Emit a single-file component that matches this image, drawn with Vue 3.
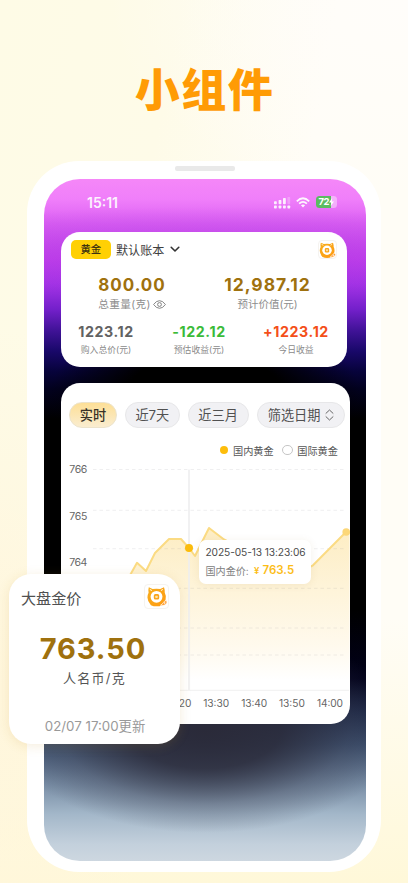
<script setup>
const totals = [
  { value: '800.00', label: '总重量(克)', eye: true },
  { value: '12,987.12', label: '预计价值(元)', eye: false },
]
const details = [
  { value: '1223.12', label: '购入总价(元)', tone: 'grey' },
  { value: '-122.12', label: '预估收益(元)', tone: 'green' },
  { value: '+1223.12', label: '今日收益', tone: 'red' },
]
const gridLines = [469.5, 510.3, 548.7, 588.3, 628, 655]
const yLabels = [
  { text: '766', y: 473.3 },
  { text: '765', y: 519.8 },
  { text: '764', y: 566 },
]
const times = [
  { text: '13:20', x: 178.4 },
  { text: '13:30', x: 216.2 },
  { text: '13:40', x: 254.2 },
  { text: '13:50', x: 291.9 },
  { text: '14:00', x: 330 },
]
const line = '120,590 131,573.5 137,562.8 146,571 155,553 169,539 181,539 189,548 195,556 209,528 224,539.5 260,558 300,572 313,565.3 346,532'
</script>

<template>
  <div class="page">
    <svg class="defs" width="0" height="0">
      <defs>
        <linearGradient id="catFill" x1="0" y1="0" x2="1" y2="1">
          <stop offset="0" stop-color="#f7ae1c" />
          <stop offset="1" stop-color="#ff9a12" />
        </linearGradient>
        <symbol id="cat" viewBox="0 0 24 24">
          <path d="M4.6 3.2 L8.2 4.9 Q12 4 15.6 4.9 L19.2 3.2 Q20.2 6 19.9 8.2 Q21.6 11.5 20.7 15 Q20 18 17.6 20.3 Q12 22.6 6.6 20.3 Q3.4 17 3.3 13 Q3.3 10.4 4.4 8.4 Q3.9 5.6 4.6 3.2Z" fill="url(#catFill)" />
          <path d="M5.9 5.4 L7.2 6.1 M17.8 5.4 L16.6 6.1" stroke="#fff" stroke-width=".9" stroke-linecap="round" />
          <circle cx="12" cy="12.3" r="5.7" fill="#fff" />
          <rect x="9.4" y="9.7" width="5.2" height="5.2" rx="1.5" fill="#f9a51c" />
          <rect x="10.9" y="11.2" width="2.2" height="2.2" rx=".5" fill="#fde3ae" />
          <path d="M15.8 20.4 Q17.6 19.6 18.6 17.8 Q19.6 16 21.4 15.8 Q22.8 17.2 21.6 19 Q19.6 21.4 15.8 20.4Z" fill="#ff9a2a" stroke="#fff" stroke-width=".7" />
          <circle cx="19.8" cy="18.2" r=".8" fill="#fff" />
        </symbol>
      </defs>
    </svg>

    <h1 class="title">小组件</h1>

    <div class="phone">
      <div class="speaker"></div>
      <div class="screen">
        <div class="status">
          <span class="clock">15:11</span>
          <svg class="signal" width="17" height="12" viewBox="0 0 17 12">
            <g fill="#fff">
              <rect x="0" y="4.2" width="2.8" height="3" rx=".7" />
              <rect x="4.6" y="3" width="2.8" height="4.2" rx=".7" />
              <rect x="9" y="1" width="2.8" height="6.2" rx=".7" />
              <rect x="13.4" y="0" width="2.8" height="7.2" rx=".7" opacity=".3" />
              <rect x="0" y="8.6" width="2.8" height="2.8" rx=".7" />
              <rect x="4.6" y="8.6" width="2.8" height="2.8" rx=".7" />
              <rect x="9" y="8.6" width="2.8" height="2.8" rx=".7" />
              <rect x="13.4" y="8.6" width="2.8" height="2.8" rx=".7" />
            </g>
          </svg>
          <svg class="wifi" width="14" height="11" viewBox="0 0 14 11">
            <g fill="none" stroke="#fff" stroke-width="1.8">
              <path d="M.8 4.3 Q7 -1.8 13.2 4.3" />
              <path d="M3.1 6.7 Q7 3.1 10.9 6.7" />
            </g>
            <path d="M4.9 8.3 Q7 6.6 9.1 8.3 L7 10.5Z" fill="#fff" />
          </svg>
          <div class="battery">
            <span>72</span>
            <svg width="5" height="8" viewBox="0 0 5 8"><path d="M3.2 0 L0 4.4 H2.2 L1.7 8 L5 3.4 H2.8Z" fill="#fff" /></svg>
          </div>
        </div>

        <section class="card account">
          <header class="account-head">
            <span class="tag">黄金</span>
            <span class="book">默认账本</span>
            <svg class="chevron" width="10" height="7" viewBox="0 0 10 7"><path d="M1.2 1.3 L5 5 L8.8 1.3" fill="none" stroke="#333" stroke-width="1.6" stroke-linecap="round" stroke-linejoin="round" /></svg>
            <span class="logo small"><svg><use href="#cat" /></svg></span>
          </header>
          <div class="totals">
            <div v-for="t in totals" :key="t.label" class="total">
              <strong>{{ t.value }}</strong>
              <span class="total-label">{{ t.label }}
                <svg v-if="t.eye" width="13" height="9" viewBox="0 0 13 9">
                  <path d="M.6 4.5 Q3.2 .7 6.5 .7 Q9.8 .7 12.4 4.5 Q9.8 8.3 6.5 8.3 Q3.2 8.3 .6 4.5Z" fill="none" stroke="#777" stroke-width=".9" />
                  <circle cx="6.5" cy="4.5" r="1.9" fill="none" stroke="#777" stroke-width=".9" />
                </svg>
              </span>
            </div>
          </div>
          <div class="details">
            <div v-for="d in details" :key="d.label" class="detail">
              <strong :class="d.tone">{{ d.value }}</strong>
              <span>{{ d.label }}</span>
            </div>
          </div>
        </section>

        <section class="card market">
          <nav class="pills">
            <span class="pill active">实时</span>
            <span class="pill week">近7天</span>
            <span class="pill month">近三月</span>
            <span class="pill range">筛选日期
              <svg width="9" height="12" viewBox="0 0 9 12"><path d="M1 4.3 L4.5 1 L8 4.3 M1 7.7 L4.5 11 L8 7.7" fill="none" stroke="#666" stroke-width="1" stroke-linecap="round" stroke-linejoin="round" /></svg>
            </span>
          </nav>
          <div class="legend">
            <i class="dot on"></i><span>国内黄金</span>
            <i class="dot off"></i><span>国际黄金</span>
          </div>
          <svg class="chart" width="292" height="262" viewBox="61 460 292 262">
            <defs>
              <linearGradient id="area" x1="0" y1="0" x2="0" y2="1">
                <stop offset="0" stop-color="#fdedc3" />
                <stop offset=".4" stop-color="#fef4da" />
                <stop offset=".75" stop-color="#fffaee" />
                <stop offset=".95" stop-color="#ffffff" />
              </linearGradient>
            </defs>
            <polygon :points="`${line} 349.5,531 349.5,688 120,688`" fill="url(#area)" />
            <line v-for="y in gridLines" :key="y" x1="93" x2="345" :y1="y" :y2="y" stroke="#80808a" stroke-opacity=".13" stroke-width="1" stroke-dasharray="3.5 3" />
            <line x1="93" x2="349" y1="690.3" y2="690.3" stroke="#f1f1f1" />
            <line x1="189" x2="189" y1="469.5" y2="690" stroke="#eeeeef" stroke-width="1.6" />
            <polyline :points="line" fill="none" stroke="#fbdb83" stroke-width="2" stroke-linejoin="round" />
            <circle cx="189" cy="548" r="4" fill="#fbbc0c" />
            <circle cx="346.2" cy="532" r="3.8" fill="#fcd778" />
            <text v-for="l in yLabels" :key="l.text" x="69.3" :y="l.y" class="axis" font-size="10.5" textLength="18">{{ l.text }}</text>
            <text v-for="t in times" :key="t.text" :x="t.x" y="706.6" text-anchor="middle" class="axis" font-size="10.2" textLength="26">{{ t.text }}</text>
          </svg>
          <div class="tooltip">
            <div class="tip-time">2025-05-13 13:23:06</div>
            <div class="tip-row"><span>国内金价:</span><i>¥</i><b>763.5</b></div>
          </div>
        </section>
      </div>
    </div>

    <section class="widget">
      <header class="widget-head">
        <span>大盘金价</span>
        <span class="logo large"><svg><use href="#cat" /></svg></span>
      </header>
      <strong class="price">763.50</strong>
      <span class="unit">人名币/克</span>
      <span class="updated">02/07 17:00更新</span>
    </section>
  </div>
</template>

<style>
body {
  background: #fffdf3;
}
</style>

<style scoped>
.page {
  position: relative;
  width: 408px;
  height: 883px;
  overflow: hidden;
  box-sizing: border-box;
  padding-top: 64.5px;
  font-family: Inter, "Noto Sans CJK SC", sans-serif;
  background:
    radial-gradient(ellipse 300px 200px at 100% 0, #fffdfa, rgba(255, 253, 250, 0) 100%),
    radial-gradient(ellipse 160px 360px at 0 78%, #fff6dc, rgba(255, 246, 220, 0) 100%),
    linear-gradient(to bottom, rgba(255, 247, 215, 0) 70%, #fff8d9 100%),
    linear-gradient(100deg, #fefbe6 0, #fefbe8 32%, #fffdf6 60%, #fffdf6 100%);
}
.defs { position: absolute; }
.title {
  margin: 0;
  height: 52px;
  line-height: 52px;
  text-align: center;
  font-size: 45px;
  font-weight: 900;
  letter-spacing: 1.5px;
  padding-left: 1px;
  color: #ff9b05;
}
.phone {
  box-sizing: border-box;
  width: 354px;
  height: 711px;
  margin: 44.5px 0 0 27px;
  padding: 4.5px 15.5px 0 17px;
  border-radius: 52px;
  background: #fff;
}
.speaker {
  width: 60px;
  height: 5.5px;
  margin: 0 0 8px 131px;
  border-radius: 2px;
  background: #e9e9e9;
}
.screen {
  position: relative;
  box-sizing: border-box;
  height: 681.5px;
  padding: 0 0 0 17px;
  border-radius: 36px;
  background:
    radial-gradient(ellipse 200px 104px at 50% 550px, #2a2a39 0, rgba(42, 42, 57, .85) 38%, rgba(56, 58, 76, .35) 72%, rgba(80, 90, 110, 0) 100%),
    linear-gradient(to bottom, rgba(0, 0, 0, 0) 0, rgba(0, 0, 0, 0) 430px, #01011a 500px, #1a2544 530px, #3c506f 565px, #71869f 600px, #a3b7c9 635px, #c3d0dc 665px, #cdd7e0 100%),
    radial-gradient(ellipse 155px 80px at 50% 215px, #000 50%, rgba(0, 0, 0, 0) 100%),
    radial-gradient(ellipse 400px 46px at 50% 74px, rgba(150, 45, 215, .4), rgba(150, 45, 215, 0) 100%),
    linear-gradient(to bottom, #f587f8 0, #f07ffa 20px, #db5ff3 45px, #c742ee 80px, #a433e6 105px, #7420cb 130px, #3f1296 152px, #19086a 172px, #07033c 192px, #02011e 210px, #000 240px);
}
.status {
  display: flex;
  align-items: center;
  height: 46px;
  padding-left: 26px;
  color: #fff;
}
.clock {
  width: 187px;
  font-size: 14px;
  font-weight: 600;
  letter-spacing: 0;
  opacity: .9;
}
.signal { margin: 1px 5px 0 0; opacity: .88; }
.wifi { margin-right: 6px; opacity: .93; }
.battery {
  display: flex;
  align-items: center;
  width: 20.5px;
  height: 11.5px;
  border-radius: 3.5px;
  background: linear-gradient(to right, #5bbb61 15px, rgba(255, 255, 255, .4) 15px);
}
.battery span {
  margin-left: 2.5px;
  font-size: 9.5px;
  line-height: 12px;
  font-weight: 700;
  letter-spacing: -.4px;
}
.card {
  position: relative;
  box-sizing: border-box;
  background: #fff;
  border-radius: 19px;
}
.account {
  width: 286px;
  height: 135px;
  margin-top: 7px;
  padding-top: 7px;
}
.account-head {
  display: flex;
  align-items: center;
  height: 21px;
  padding: 0 10px 0 10px;
}
.tag {
  width: 39.5px;
  height: 18.5px;
  line-height: 18.5px;
  border-radius: 5px;
  background: #ffd004;
  text-align: center;
  font-size: 10.3px;
  font-weight: 500;
  color: #3d3310;
}
.book {
  margin-left: 5.5px;
  font-size: 12.1px;
  color: #3f3f3f;
}
.chevron { margin-left: 5.5px; }
.logo {
  display: flex;
  align-items: center;
  justify-content: center;
  box-sizing: border-box;
  margin-left: auto;
  border: 1px solid #f5f3f0;
  border-radius: 4px;
  background: #fff;
}
.logo.small { width: 19.5px; height: 19.5px; }
.logo.small svg { flex: none; width: 20px; height: 20px; }
.logo.large { width: 25px; height: 25px; }
.logo.large svg { flex: none; width: 25px; height: 25px; }
.totals {
  display: grid;
  grid-template-columns: 142px 129px;
  margin-top: 14px;
}
.total, .detail {
  display: flex;
  flex-direction: column;
  align-items: center;
}
.total strong {
  line-height: 22px;
  font-size: 17px;
  font-weight: 700;
  letter-spacing: 1px;
  color: #9f710e;
}
.total:nth-child(2) strong { font-size: 17.5px; letter-spacing: .95px; }
.total-label {
  display: flex;
  align-items: center;
  gap: 2px;
  line-height: 17px;
  font-size: 10.7px;
  letter-spacing: .3px;
  color: #8d8d8d;
}
.total:nth-child(2) .total-label { font-size: 10.5px; letter-spacing: 0; }
.details {
  display: grid;
  grid-template-columns: 90px 96px 98px;
  margin-top: 9.5px;
}
.detail strong {
  line-height: 18px;
  font-size: 14.2px;
  font-weight: 700;
  letter-spacing: .6px;
}
.detail span {
  line-height: 17px;
  font-size: 8.8px;
  color: #8a8a8a;
}
.grey { color: #626262; }
.green { color: #3bbb38; }
.red { color: #f44f19; }
.market {
  width: 289px;
  height: 341px;
  margin-top: 16px;
  padding-top: 19px;
}
.pills {
  display: flex;
  gap: 7.8px;
  padding-left: 8px;
}
.pill {
  display: flex;
  align-items: center;
  justify-content: center;
  gap: 5px;
  box-sizing: border-box;
  height: 26px;
  padding-bottom: 1px;
  border: 1px solid #e7e7e9;
  border-radius: 13px;
  background: #f1f1f4;
  font-size: 13.2px;
  color: #505050;
}
.pill.active {
  width: 48px;
  border-color: #ece3cb;
  background: linear-gradient(to bottom, #fddf96, #faedd0);
  font-weight: 500;
  color: #383228;
}
.week { width: 55px; }
.month { width: 61px; }
.range { width: 88px; margin-left: .7px; }
.legend {
  display: flex;
  align-items: center;
  justify-content: flex-end;
  height: 16px;
  margin-top: 14px;
  padding-right: 12px;
  font-size: 10.2px;
  color: #555;
}
.dot {
  box-sizing: border-box;
  border-radius: 50%;
}
.dot.on { width: 8px; height: 8px; margin-right: 5.5px; background: #fdbd0b; }
.dot.off { width: 10.5px; height: 10.5px; margin: 0 4.5px 0 8.5px; border: 1px solid #c6c6c6; }
.chart {
  display: block;
  margin-top: 2px;
}
.axis {
  font-family: Inter, sans-serif;
  fill: #666;
}
.tooltip {
  position: absolute;
  left: 138px;
  top: 157px;
  box-sizing: border-box;
  width: 112px;
  height: 44px;
  padding: 3.5px 0 0 6.5px;
  border-radius: 7px;
  background: #fff;
  box-shadow: 0 1px 8px rgba(130, 100, 30, .09);
  white-space: nowrap;
}
.tip-time {
  line-height: 17px;
  font-size: 10.2px;
  letter-spacing: -.1px;
  color: #4c4c4c;
}
.tip-row {
  display: flex;
  align-items: center;
  height: 19px;
  font-size: 10.1px;
  color: #808080;
}
.tip-row span { width: 48.5px; }
.tip-row b {
  font-size: 11.5px;
  font-weight: 600;
  color: #fcbd17;
}
.tip-row i {
  width: 8.5px;
  font-style: normal;
  font-size: 9.5px;
  font-weight: 600;
  color: #fcbd17;
}
.widget {
  position: absolute;
  left: 9px;
  top: 573.5px;
  box-sizing: border-box;
  width: 171px;
  height: 170.5px;
  padding: 10.5px 11px 0 12px;
  border-radius: 22px;
  background: #fff;
  box-shadow: 0 2px 12px rgba(190, 140, 40, .16);
  display: flex;
  flex-direction: column;
}
.widget-head {
  display: flex;
  align-items: center;
  height: 25px;
  font-size: 15.1px;
  color: #505050;
}
.price {
  margin-top: 20px;
  line-height: 40px;
  text-align: center;
  padding-right: 4px;
  font-size: 29px;
  font-weight: 700;
  letter-spacing: .9px;
  color: #9f710e;
}
.unit {
  line-height: 18px;
  padding-right: 1px;
  text-align: center;
  font-size: 13px;
  letter-spacing: 1.3px;
  color: #555;
}
.updated {
  margin-top: 29.5px;
  line-height: 18px;
  text-align: center;
  font-size: 13.3px;
  color: #999;
}
</style>
